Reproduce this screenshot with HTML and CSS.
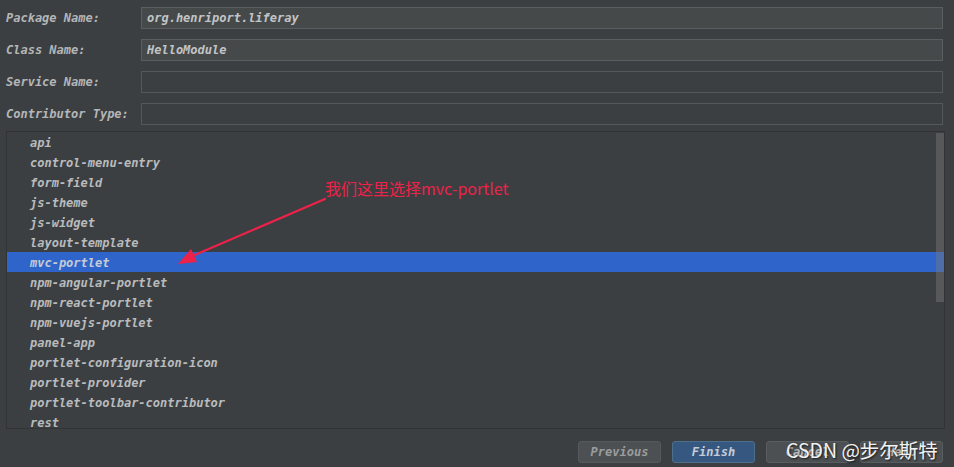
FILE: index.html
```html
<!DOCTYPE html>
<html>
<head>
<meta charset="utf-8">
<link rel="stylesheet" href="styles.css">
</head>
<body>
<div class="dialog">
  <div class="form">
    <div class="label">Package Name:</div>
    <div class="field filled">org.henriport.liferay</div>
    <div class="label">Class Name:</div>
    <div class="field filled">HelloModule</div>
    <div class="label">Service Name:</div>
    <div class="field"></div>
    <div class="label">Contributor Type:</div>
    <div class="field"></div>
  </div>
  <div class="list">
    <div class="row">api</div>
    <div class="row">control-menu-entry</div>
    <div class="row">form-field</div>
    <div class="row">js-theme</div>
    <div class="row">js-widget</div>
    <div class="row">layout-template</div>
    <div class="row selected">mvc-portlet</div>
    <div class="row">npm-angular-portlet</div>
    <div class="row">npm-react-portlet</div>
    <div class="row">npm-vuejs-portlet</div>
    <div class="row">panel-app</div>
    <div class="row">portlet-configuration-icon</div>
    <div class="row">portlet-provider</div>
    <div class="row">portlet-toolbar-contributor</div>
    <div class="row">rest</div>
    <div class="scrollbar"></div>
  </div>
  <div class="buttons">
    <div class="btn muted">Previous</div>
    <div class="btn primary">Finish</div>
    <div class="btn">Cancel</div>
    <div class="btn">Help</div>
  </div>
  <div class="note">我们这里选择mvc-portlet</div>
  <svg class="arrow" width="954" height="467" viewBox="0 0 954 467">
    <line x1="325" y1="199" x2="190" y2="257" stroke="#ee2149" stroke-width="2.2" stroke-linecap="round"/>
    <polygon points="178,264 191,249 197,262" fill="#ee2149"/>
  </svg>
  <div class="watermark">CSDN @步尔斯特</div>
</div>
</body>
</html>
```
FILE: styles.css
```css
html, body {
  margin: 0;
  padding: 0;
  background: #3c3f41;
}
.dialog {
  position: relative;
  width: 954px;
  height: 467px;
  overflow: hidden;
  font-family: "DejaVu Sans Mono", "Liberation Mono", monospace;
  font-size: 12px;
  font-weight: bold;
  font-style: oblique;
  color: #bbbbbb;
  box-sizing: border-box;
  padding-top: 7px;
}
.form {
  display: grid;
  grid-template-columns: 135px 802px;
  grid-auto-rows: 22px;
  row-gap: 10px;
  padding-left: 6px;
  align-items: center;
}
.label {
  color: #b4b6b8;
  line-height: 22px;
}
.field {
  height: 22px;
  box-sizing: border-box;
  border: 1px solid #555859;
  background: #3c3f41;
  line-height: 20px;
  padding-left: 5px;
  color: #c2c4c6;
}
.field.filled {
  background: #45494a;
  border-color: #5b5e60;
}
.list {
  position: relative;
  margin: 6px 0 0 6px;
  width: 939px;
  height: 298px;
  box-sizing: border-box;
  border: 1px solid #313335;
  overflow: hidden;
}
.row {
  height: 20px;
  line-height: 22px;
  overflow: hidden;
  padding-left: 23px;
  color: #b9bbbd;
}
.row.selected {
  background: #2f65ca;
  color: #c4cbd6;
}
.scrollbar {
  position: absolute;
  top: 1px;
  right: 0;
  width: 8px;
  height: 169px;
  background: rgba(125, 125, 125, 0.42);
}
.buttons {
  display: flex;
  justify-content: flex-end;
  gap: 11px;
  margin-top: 12px;
  padding-right: 11px;
}
.btn {
  width: 83px;
  height: 22px;
  box-sizing: border-box;
  border: 1px solid #5a5d5f;
  border-radius: 3px;
  background: #4c5052;
  text-align: center;
  line-height: 20px;
  color: #bbbbbb;
}
.btn.muted {
  color: #9a9c9e;
  border-color: #56595b;
}
.btn.primary {
  background: #365880;
  border-color: #4c708c;
  color: #c4ccd6;
}
.note {
  position: absolute;
  left: 325px;
  top: 177px;
  font-family: "Noto Sans CJK SC", "Noto Sans", sans-serif;
  font-style: normal;
  font-weight: normal;
  font-size: 16px;
  line-height: 22px;
  color: #ee2149;
}
.arrow {
  position: absolute;
  left: 0;
  top: 0;
}
.watermark {
  position: absolute;
  left: 786px;
  top: 436px;
  font-family: "Noto Sans CJK SC", "Noto Sans", sans-serif;
  font-style: normal;
  font-weight: normal;
  font-size: 19.5px;
  line-height: 28px;
  color: #f2f2f2;
  text-shadow: 1px 1px 2px rgba(0, 0, 0, 0.7);
}
```
